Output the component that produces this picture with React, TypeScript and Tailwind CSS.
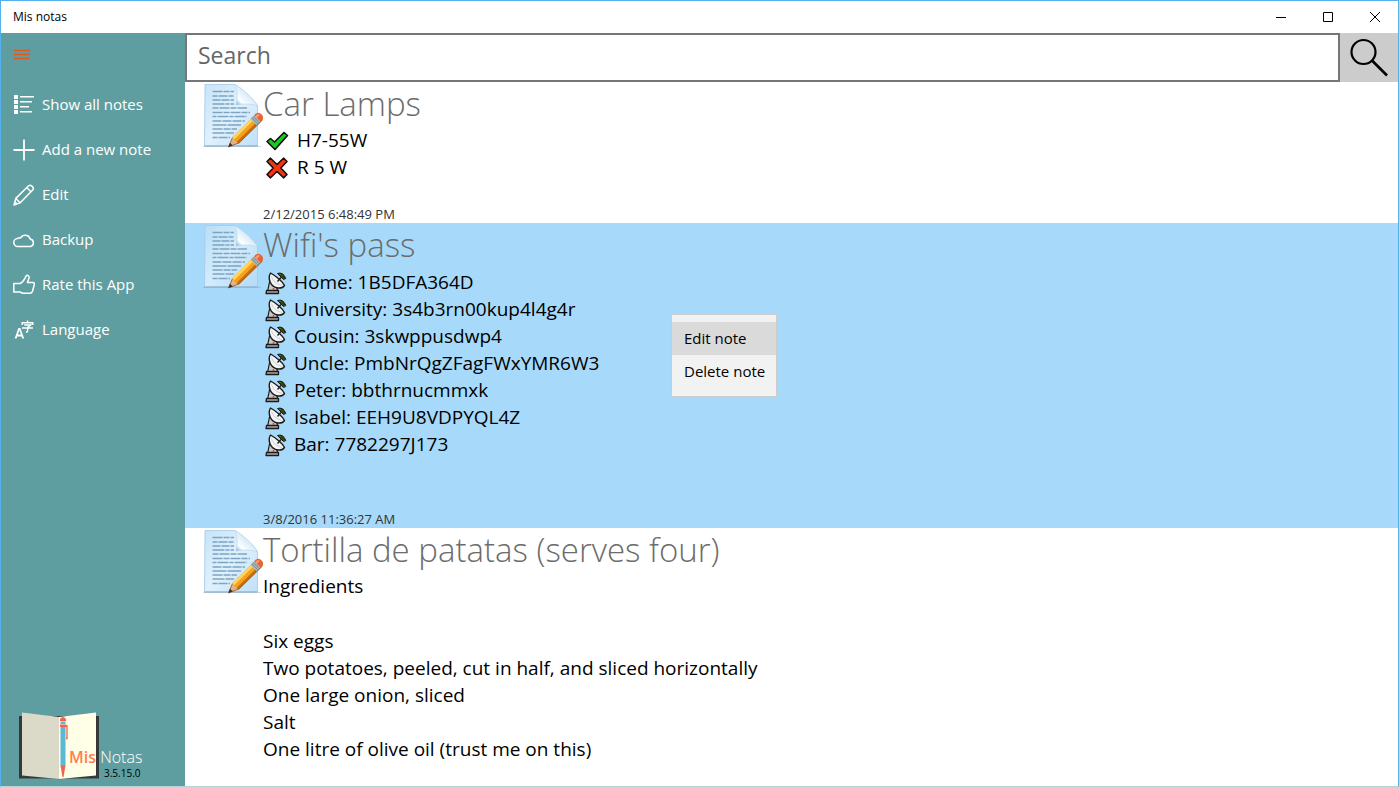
import type { ReactNode } from "react";

function ListIcon() {
  return (
    <svg viewBox="0 0 22 22" className="h-[22px] w-[22px] shrink-0" fill="white" aria-hidden="true">
      {[1, 6, 11, 16].map((y, i) => (
        <g key={y}>
          <rect x="1" y={y} width="4" height="4" />
          <rect x="7" y={y + 1} width={[14, 12, 9, 12][i]} height="1.5" />
        </g>
      ))}
    </svg>
  );
}

function StrokeIcon({ children }: { children: ReactNode }) {
  return (
    <svg
      viewBox="0 0 22 22"
      className="h-[22px] w-[22px] shrink-0"
      fill="none"
      stroke="white"
      strokeWidth="1.5"
      strokeLinejoin="round"
      aria-hidden="true"
    >
      {children}
    </svg>
  );
}

function LanguageIcon() {
  return (
    <svg viewBox="0 0 22 22" className="h-[22px] w-[22px] shrink-0" fill="none" stroke="white" aria-hidden="true">
      <path d="M2.6 19.5 6 9.8h.8l3.4 9.7M3.7 16.5h5.4" strokeWidth="1.8" />
      <path d="M14.5 1.5v2M9.2 6V3.8h10.6V6M11.2 6h6.4l-3 2.6v3.6q0 1-1.8.8M9 9h11" strokeWidth="1.4" />
    </svg>
  );
}

const menuItems: { label: string; icon: ReactNode }[] = [
  { label: "Show all notes", icon: <ListIcon /> },
  {
    label: "Add a new note",
    icon: (
      <StrokeIcon>
        <path d="M11 .5v21M.5 11h21" strokeWidth="1.8" />
      </StrokeIcon>
    ),
  },
  {
    label: "Edit",
    icon: (
      <StrokeIcon>
        <path d="M1 21l1.8-6.6L15.6 1.8q1.5-1.2 3 0l1.1 1.1q1.3 1.5 0 3L7 18.9 1 21zM2.8 14.4l4.3 4.4M13.8 3.6l4.3 4.4M1.9 18l1.900 1.900" />
      </StrokeIcon>
    ),
  },
  {
    label: "Backup",
    icon: (
      <StrokeIcon>
        <path d="M5 17.500a4 4 0 0 1-.4-8 4 4 0 0 1 3-.6 5.200 5.200 0 0 1 9.600 1.200 3.800 3.800 0 0 1 .4 7.400z" />
      </StrokeIcon>
    ),
  },
  {
    label: "Rate this App",
    icon: (
      <StrokeIcon>
        <path d="M.8 9.500h6.400c3-1.600 4.600-4.400 5.800-7.400q.8-1.200 2.200-.5 1.300.8.8 2.400l-1.600 4.500h5.500q1.800.3 1.400 2l-1.800 6.800q-.6 2-2.600 2H10.400q-1.800 0-3-1.300H.8z" />
      </StrokeIcon>
    ),
  },
  { label: "Language", icon: <LanguageIcon /> },
];

function NoteIcon({ id }: { id: string }) {
  return (
    <svg viewBox="0 0 60 64" className="h-16 w-[60px] shrink-0" aria-hidden="true">
      <defs>
        <linearGradient id={`${id}-paper`} x1="0" y1="0" x2="1" y2="1">
          <stop offset="0" stopColor="#bddff6" />
          <stop offset="0.5" stopColor="#d9effc" />
          <stop offset="1" stopColor="#b5daf6" />
        </linearGradient>
        <linearGradient id={`${id}-fold`} x1="0.1" y1="0.9" x2="0.8" y2="0.2">
          <stop offset="0" stopColor="#8fc0e6" />
          <stop offset="0.2" stopColor="#ffffff" />
          <stop offset="1" stopColor="#b9dcf5" />
        </linearGradient>
      </defs>
      <path d="M0 62h58v1H0z" fill="#7d97ad" opacity="0.35" />
      <path d="M2 .5H31.500C36 2 52 16 54.500 22V62H1.500z" fill={`url(#${id}-paper)`} fillOpacity="0.85" stroke="#a3c9e6" strokeWidth="0.800" />
      <path d="M1.500 62h53" stroke="#8ba9c2" />
      <path d="M31.500 .5c3 5 3.500 13 1.500 20.500 7-1.500 16-1.500 21.500 1C52 16 38 3 31.500 .5z" fill={`url(#${id}-fold)`} stroke="#a9cde9" strokeWidth="0.500" />
      <g stroke="#7fa3c2" strokeWidth="1.300" fill="none">
        <path d="M9.500 7.500H31" strokeDasharray="10 1 6 1" />
        <path d="M9.500 12H31" strokeDasharray="5 1 9 1" />
        <path d="M9.500 16H31" strokeDasharray="8 1" />
        <path d="M9.500 20H31" strokeDasharray="12 1 4 1" />
        <path d="M9.500 24H44" strokeDasharray="6 1 10 1" />
        <path d="M9.500 28.500H47" strokeDasharray="10 1 6 1" />
        <path d="M9.500 32.500H44" strokeDasharray="4 1 11 1" />
        <path d="M9.500 37H42" strokeDasharray="9 1" />
        <path d="M9.500 41H38" strokeDasharray="14 1" />
        <path d="M9.500 45H34" strokeDasharray="10 1 7 1" />
        <path d="M9.500 49H31" strokeDasharray="12 1" />
        <path d="M9.500 53.500H27" strokeDasharray="5 1 9 1" />
      </g>
      <g transform="translate(25.500 63) rotate(-44.500)">
        <path d="M0 0 10-4.200V4.200z" fill="#e6b27d" stroke="#8a5a35" strokeWidth="0.800" />
        <path d="M0 0 4-2V2z" fill="#38302e" />
        <path d="M9.500-4.500H35.500V4.500H9.500z" fill="#f6a21a" />
        <path d="M9.500-4.500H35.500V-1.500H9.500z" fill="#ffd35c" />
        <path d="M9.500 2H35.500V4.500H9.500z" fill="#c96c0d" />
        <path d="M35.500-4.700H40.500V4.700H35.500z" fill="#a6b8b8" />
        <path d="M37-4.700v9.400M39-4.700v9.400" stroke="#6c7f80" strokeWidth="0.700" />
        <path d="M40.500-4.700h2.500q3.500 1 3.500 4.700t-3.500 4.700H40.500z" fill="#e86433" />
        <path d="M40.500-3h3q1.500 1 1.500 2H40.500z" fill="#f9a078" />
        <path d="M9.500 4.600H42" stroke="#7a4a20" strokeWidth="0.700" />
      </g>
    </svg>
  );
}

function CheckIcon() {
  return (
    <svg viewBox="0 0 24 22" className="h-[22px] w-6 shrink-0" aria-label="Yes" role="img">
      <path d="M2 11.500 5.500 8.500 9.500 12 19 2.500 22.500 5.500 10 19.500z" fill="#12cf1c" stroke="#111" strokeWidth="1.600" strokeLinejoin="round" />
    </svg>
  );
}

function CrossIcon() {
  return (
    <svg viewBox="0 0 24 22" className="h-[22px] w-6 shrink-0" aria-label="No" role="img">
      <path
        d="M2 4.500 5.500 1.200 12 7.500 18.500 1.200 22 4.500 15.800 11 22 17.500 18.500 20.800 12 14.500 5.500 20.800 2 17.500 8.200 11z"
        fill="#f5330f"
        stroke="#111"
        strokeWidth="1.600"
        strokeLinejoin="round"
      />
    </svg>
  );
}

function DishIcon() {
  return (
    <svg viewBox="0 0 22 24" className="h-6 w-[22px] shrink-0" aria-hidden="true">
      <path d="M12.500 2.500Q18 .5 20.800 7.500L18.500 8.500 16 6z" fill="#5d7400" stroke="#1b1b1b" strokeLinejoin="round" />
      <path d="M14 4.200q3.500 0 4.800 3.500M15.500 2.500q3 1 4.200 4.500" fill="none" stroke="#1b1b1b" strokeWidth="0.900" />
      <path d="M4.500 11 2.800 19.500H12.500L11.500 15z" fill="#c9c9c9" stroke="#1b1b1b" strokeWidth="1.200" />
      <path d="M1.500 19.500H13.500v3H1z" fill="#aaa" stroke="#1b1b1b" strokeWidth="1.300" strokeLinejoin="round" />
      <path d="M5.500 2C2.500 7 5 16 13 17q4.500.5 6.500-2.500-1.500-3-5.500-6.500T5.500 2z" fill="#f4f4f4" stroke="#1b1b1b" strokeWidth="1.400" strokeLinejoin="round" />
      <path d="M6.500 5.500Q8 12 17 14.500" fill="none" stroke="#cfcfcf" />
      <path d="M12.500 10.500 16 6.500" stroke="#1b1b1b" strokeWidth="1.400" />
      <circle cx="8.500" cy="18" r="1" fill="#e0452c" />
    </svg>
  );
}

function BookLogo() {
  return (
    <svg viewBox="0 0 80 68" className="h-[68px] w-20" aria-hidden="true">
      <path d="M0 4h80v62.500H42l-2 1-2-1H0z" fill="#37383a" />
      <path d="M3 .5 40 5v62L3 63.500z" fill="#dbdac8" />
      <path d="M77 .5 40 5v62l37-3.500z" fill="#fffee6" />
      <path d="M41.500 14h5v40h-5z" fill="#5bb9d6" />
      <path d="M41 9V7.500Q41.500 5 44 5t3 2.500V9zM41 12.500h6.500v2.500H41z" fill="#ef6350" />
      <path d="M41.500 9.500h5v2.500h-5z" fill="#5bb9d6" />
      <path d="M47 14h1v12.500H47" fill="none" stroke="#ef6350" strokeWidth="1.300" />
      <path d="M41.500 53.500h5l-2 11.500h-1z" fill="#ef6350" />
    </svg>
  );
}

function Note({
  id,
  title,
  date,
  selected,
  children,
}: {
  id: string;
  title: string;
  date?: string;
  selected?: boolean;
  children: ReactNode;
}) {
  return (
    <article className={selected ? "flex shrink-0 bg-[#a7dafa] pl-[18px]" : "flex shrink-0 bg-white pl-[18px]"}>
      <div className="shrink-0 pt-[2px]">
        <NoteIcon id={id} />
      </div>
      <div className="min-w-0 grow">
        <h2 className="text-[33px] leading-[44px] font-light text-[#6c6c6c]">{title}</h2>
        <div className="pt-px text-[19px] leading-[27px] text-black">{children}</div>
        {date && <time className="block pb-px text-[13px] leading-4 text-[#333]">{date}</time>}
      </div>
    </article>
  );
}

const networks = [
  "Home: 1B5DFA364D",
  "University: 3s4b3rn00kup4l4g4r",
  "Cousin: 3skwppusdwp4",
  "Uncle: PmbNrQgZFagFWxYMR6W3",
  "Peter: bbthrnucmmxk",
  "Isabel: EEH9U8VDPYQL4Z",
  "Bar: 7782297J173",
];

export default function App() {
  return (
    <div className="flex h-screen flex-col overflow-hidden border border-[#55b0ee] border-b-[#b5d3d6] bg-white font-['Open_Sans','Noto_Sans',sans-serif] text-black">
      <header className="flex h-8 shrink-0 items-center justify-between pb-px pl-3">
        <h1 className="text-xs">Mis notas</h1>
        <div className="flex">
          <button aria-label="Minimize" className="flex h-8 w-[47px] items-center justify-center">
            <svg viewBox="0 0 12 12" className="h-3 w-3" stroke="black"><path d="M1 6.500h10" /></svg>
          </button>
          <button aria-label="Maximize" className="flex h-8 w-[47px] items-center justify-center">
            <svg viewBox="0 0 12 12" className="h-3 w-3" fill="none" stroke="black"><path d="M1.500 1.500h9v9h-9z" /></svg>
          </button>
          <button aria-label="Close" className="flex h-8 w-[47px] items-center justify-center">
            <svg viewBox="0 0 12 12" className="h-3 w-3" stroke="black"><path d="M1 1l10 10M11 1 1 11" /></svg>
          </button>
        </div>
      </header>

      <div className="flex min-h-0 grow">
        <nav className="flex w-[184px] shrink-0 flex-col bg-[#5f9ea0] text-white">
          <button aria-label="Menu" className="flex h-[49px] w-10 items-center pb-[5px] pl-3">
            <svg viewBox="0 0 18 12" className="h-3 w-[18px]" stroke="#e2571e" strokeWidth="1.300">
              <path d="M1 1.500h16M1 5.500h16M1 9.500h16" />
            </svg>
          </button>
          <ul>
            {menuItems.map((item) => (
              <li key={item.label}>
                <button className="flex h-[45px] w-full items-center gap-[7px] pl-3 text-left text-[15px]">
                  {item.icon}
                  {item.label}
                </button>
              </li>
            ))}
          </ul>
          <div className="relative mt-auto pb-[6px] pl-[18px]">
            <BookLogo />
            <div className="absolute bottom-[6px] left-[68px]">
              <p className="text-base leading-[18px]">
                <span className="font-semibold text-[#ff7f50]">Mis</span> <span className="font-light">Notas</span>
              </p>
              <p className="pl-[35px] text-[10px] leading-[14px] text-black">3.5.15.0</p>
            </div>
          </div>
        </nav>

        <main className="flex min-w-0 grow flex-col">
          <div className="flex h-[49px] shrink-0 bg-[#cccccc]">
            <input
              type="search"
              aria-label="Search"
              placeholder="Search"
              className="min-w-0 grow border-2 border-[#767676] bg-white px-[11px] pb-1 text-[23px] outline-none placeholder:text-[#666]"
            />
            <button aria-label="Search notes" className="flex w-[58px] items-center justify-center">
              <svg viewBox="0 0 40 40" className="h-10 w-10" fill="none" stroke="black" strokeWidth="2.200">
                <circle cx="14.500" cy="14" r="12" />
                <path d="M23 22.500 38 37.500" strokeWidth="2.600" />
              </svg>
            </button>
          </div>

          <div className="relative flex min-h-0 grow flex-col overflow-hidden">
            <Note id="lamps" title="Car Lamps" date="2/12/2015 6:48:49 PM">
              <ul className="pb-[25px] pl-[2px]">
                <li className="flex items-center gap-2"><CheckIcon />H7-55W</li>
                <li className="flex items-center gap-2"><CrossIcon />R 5 W</li>
              </ul>
            </Note>
            <Note id="wifi" title="Wifi's pass" date="3/8/2016 11:36:27 AM" selected>
              <ul className="pt-px pb-[53px] pl-[2px]">
                {networks.map((n) => (
                  <li key={n} className="flex items-center gap-[7px]"><DishIcon />{n}</li>
                ))}
              </ul>
            </Note>
            <Note id="tortilla" title="Tortilla de patatas (serves four)">
              <p>Ingredients</p>
              <p className="pt-7">Six eggs</p>
              <p>Two potatoes, peeled, cut in half, and sliced horizontally</p>
              <p>One large onion, sliced</p>
              <p>Salt</p>
              <p>One litre of olive oil (trust me on this)</p>
            </Note>

            <div role="menu" className="absolute top-[232px] left-[486px] w-[106px] border border-[#ccc] bg-[#f2f2f2] pt-[7px] pb-2 text-[15px]">
              <button role="menuitem" className="block h-[33px] w-full bg-[#dadada] pl-3 text-left">Edit note</button>
              <button role="menuitem" className="block h-[33px] w-full pl-3 text-left">Delete note</button>
            </div>
          </div>
        </main>
      </div>
    </div>
  );
}
